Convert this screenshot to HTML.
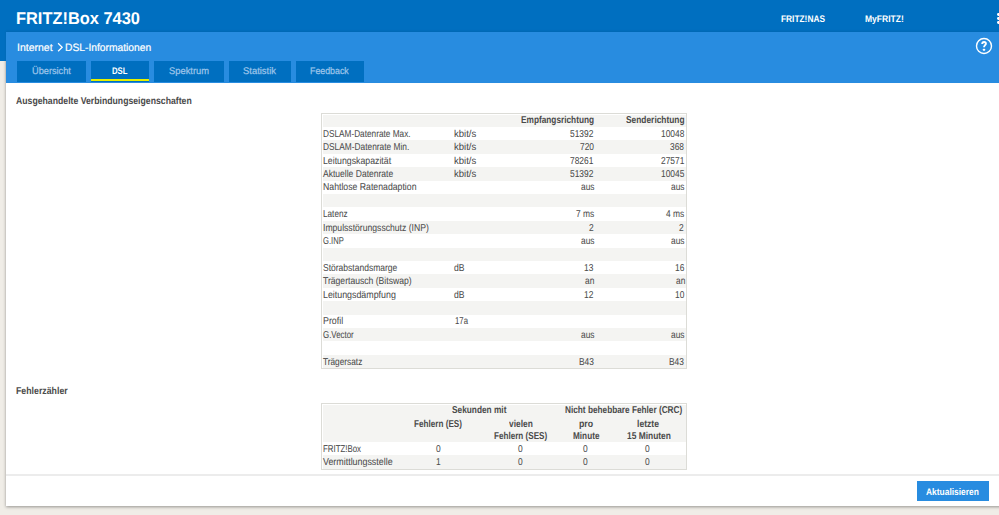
<!DOCTYPE html>
<html><head><meta charset="utf-8"><style>
html,body{margin:0;padding:0}
body{width:999px;height:515px;overflow:hidden;position:relative;background:#f0ede7;font-family:"Liberation Sans",sans-serif}
.n{font-weight:normal;-webkit-text-stroke:0.05px}
.b{font-weight:bold}
.t{position:absolute;white-space:nowrap;text-rendering:geometricPrecision;line-height:normal;transform-origin:0 0;font-family:"Liberation Sans",sans-serif}
</style></head><body>
<div style="position:absolute;left:6px;top:32px;width:1000px;height:474px;background:#fff;box-shadow:0 1px 3px rgba(0,0,0,.38)"></div>
<div style="position:absolute;left:0;top:0;width:999px;height:61px;background:#006fc0"></div>
<div style="position:absolute;left:6px;top:32px;width:993px;height:51px;background:#288ce0;box-shadow:0 -1px 2px rgba(0,0,0,.08)"></div>
<div style="position:absolute;left:6px;top:474px;width:993px;height:2px;background:#ececec"></div>
<!-- tabs -->
<div style="position:absolute;left:17px;top:61px;width:69px;height:21px;background:#006fc0"></div>
<div style="position:absolute;left:91px;top:61px;width:58px;height:21px;background:#006fc0"></div>
<div style="position:absolute;left:91px;top:79px;width:58px;height:2px;background:#e6f000"></div>
<div style="position:absolute;left:154px;top:61px;width:70px;height:21px;background:#006fc0"></div>
<div style="position:absolute;left:229px;top:61px;width:62px;height:21px;background:#006fc0"></div>
<div style="position:absolute;left:296px;top:61px;width:68px;height:21px;background:#006fc0"></div>
<!-- menu icon -->
<div style="position:absolute;left:997px;top:13px;width:8px;height:2.8px;border-radius:1.4px;background:#fff"></div>
<div style="position:absolute;left:997px;top:17.2px;width:8px;height:2.8px;border-radius:1.4px;background:#fff"></div>
<div style="position:absolute;left:997px;top:21.3px;width:8px;height:2.8px;border-radius:1.4px;background:#fff"></div>
<!-- help icon -->
<svg style="position:absolute;left:975px;top:37px" width="18" height="18" viewBox="0 0 18 18"><circle cx="9" cy="9" r="7.5" fill="none" stroke="#fff" stroke-width="1.4"/><path d="M7.2 7.1C7.2 5.8 8 5 9.1 5C10.2 5 10.9 5.7 10.9 6.7C10.9 8.1 9 8.3 9 10.3" fill="none" stroke="#fff" stroke-width="1.9"/><rect x="7.9" y="11.7" width="2.2" height="2.1" rx="0.6" fill="#fff"/></svg>
<!-- chevron -->
<svg style="position:absolute;left:56px;top:42px" width="8" height="11" viewBox="0 0 8 11"><path d="M2.1 1.2L6.2 5.2L2.1 9.2" fill="none" stroke="#fff" stroke-width="1.25"/></svg>
<!-- button -->
<div style="position:absolute;left:917px;top:481px;width:72px;height:20px;background:#288ce0"></div>
<div style="position:absolute;left:321px;top:113px;width:366px;height:256px;background:#fff;box-sizing:border-box;border:1px solid #dcdcd7"></div><div style="position:absolute;left:323px;top:115px;width:363px;height:12px;background:#f4f4f2;"></div><div style="position:absolute;left:323px;top:140.4px;width:363px;height:13.4px;background:#f4f4f2;"></div><div style="position:absolute;left:323px;top:167.2px;width:363px;height:13.4px;background:#f4f4f2;"></div><div style="position:absolute;left:323px;top:194.0px;width:363px;height:13.4px;background:#f4f4f2;"></div><div style="position:absolute;left:323px;top:220.8px;width:363px;height:13.4px;background:#f4f4f2;"></div><div style="position:absolute;left:323px;top:247.6px;width:363px;height:13.4px;background:#f4f4f2;"></div><div style="position:absolute;left:323px;top:274.4px;width:363px;height:13.4px;background:#f4f4f2;"></div><div style="position:absolute;left:323px;top:301.2px;width:363px;height:13.4px;background:#f4f4f2;"></div><div style="position:absolute;left:323px;top:328.0px;width:363px;height:13.4px;background:#f4f4f2;"></div><div style="position:absolute;left:323px;top:354.8px;width:363px;height:13.4px;background:#f4f4f2;"></div>
<div style="position:absolute;left:321px;top:403px;width:366px;height:67px;background:#fff;box-sizing:border-box;border:1px solid #dcdcd7"></div><div style="position:absolute;left:323px;top:405px;width:363px;height:37px;background:#f4f4f2;"></div><div style="position:absolute;left:323px;top:455.4px;width:363px;height:13.2px;background:#f4f4f2;"></div>
<div class="t b" style="left:16.03px;top:9.00px;font-size:17px;color:#fff;transform:scaleX(0.9652);">FRITZ!Box 7430</div>
<div class="t b" style="left:780.80px;top:14.00px;font-size:9.6px;color:#fff;transform:scaleX(0.8687);">FRITZ!NAS</div>
<div class="t b" style="left:864.60px;top:14.00px;font-size:9.6px;color:#fff;transform:scaleX(0.8896);">MyFRITZ!</div>
<div class="t n" style="left:17.20px;top:42.00px;font-size:10.6px;color:#fff;transform:scaleX(0.9894);-webkit-text-stroke:0.2px">Internet</div>
<div class="t n" style="left:65.30px;top:42.00px;font-size:10.6px;color:#fff;transform:scaleX(0.9694);-webkit-text-stroke:0.2px">DSL-Informationen</div>
<div class="t n" style="left:32.00px;top:66.00px;font-size:9.6px;color:#9cc4ea;transform:scaleX(0.9595);-webkit-text-stroke:0.25px">Übersicht</div>
<div class="t b" style="left:112.30px;top:66.00px;font-size:9.6px;color:#fff;transform:scaleX(0.8072);">DSL</div>
<div class="t n" style="left:168.80px;top:66.00px;font-size:9.6px;color:#9cc4ea;transform:scaleX(0.9741);-webkit-text-stroke:0.25px">Spektrum</div>
<div class="t n" style="left:243.00px;top:66.00px;font-size:9.6px;color:#9cc4ea;transform:scaleX(0.9825);-webkit-text-stroke:0.25px">Statistik</div>
<div class="t n" style="left:310.40px;top:66.00px;font-size:9.6px;color:#9cc4ea;transform:scaleX(0.9189);-webkit-text-stroke:0.25px">Feedback</div>
<div class="t b" style="left:16.00px;top:96.00px;font-size:10px;color:#4a4a4a;transform:scaleX(0.8687);">Ausgehandelte Verbindungseigenschaften</div>
<div class="t b" style="left:16.00px;top:386.00px;font-size:10px;color:#4a4a4a;transform:scaleX(0.8777);">Fehlerzähler</div>
<div class="t b" style="left:521.20px;top:115.00px;font-size:10px;color:#4a4a4a;transform:scaleX(0.8274);">Empfangsrichtung</div>
<div class="t b" style="left:626.00px;top:115.00px;font-size:10px;color:#4a4a4a;transform:scaleX(0.8370);">Senderichtung</div>
<div class="t n" style="left:322.90px;top:129.00px;font-size:10px;color:#4a4a4a;transform:scaleX(0.8247);">DSLAM-Datenrate Max.</div>
<div class="t n" style="left:454.10px;top:129.00px;font-size:10px;color:#4a4a4a;transform:scaleX(0.9554);">kbit/s</div>
<div class="t n" style="left:570.47px;top:129.00px;font-size:10px;color:#4a4a4a;transform:scaleX(0.8400);">51392</div>
<div class="t n" style="left:660.67px;top:129.00px;font-size:10px;color:#4a4a4a;transform:scaleX(0.8400);">10048</div>
<div class="t n" style="left:322.90px;top:142.00px;font-size:10px;color:#4a4a4a;transform:scaleX(0.8344);">DSLAM-Datenrate Min.</div>
<div class="t n" style="left:454.10px;top:142.00px;font-size:10px;color:#4a4a4a;transform:scaleX(0.9554);">kbit/s</div>
<div class="t n" style="left:579.82px;top:142.00px;font-size:10px;color:#4a4a4a;transform:scaleX(0.8400);">720</div>
<div class="t n" style="left:670.02px;top:142.00px;font-size:10px;color:#4a4a4a;transform:scaleX(0.8400);">368</div>
<div class="t n" style="left:322.90px;top:156.00px;font-size:10px;color:#4a4a4a;transform:scaleX(0.8750);">Leitungskapazität</div>
<div class="t n" style="left:454.10px;top:156.00px;font-size:10px;color:#4a4a4a;transform:scaleX(0.9554);">kbit/s</div>
<div class="t n" style="left:570.47px;top:156.00px;font-size:10px;color:#4a4a4a;transform:scaleX(0.8400);">78261</div>
<div class="t n" style="left:660.67px;top:156.00px;font-size:10px;color:#4a4a4a;transform:scaleX(0.8400);">27571</div>
<div class="t n" style="left:322.90px;top:169.00px;font-size:10px;color:#4a4a4a;transform:scaleX(0.8536);">Aktuelle Datenrate</div>
<div class="t n" style="left:454.10px;top:169.00px;font-size:10px;color:#4a4a4a;transform:scaleX(0.9554);">kbit/s</div>
<div class="t n" style="left:570.47px;top:169.00px;font-size:10px;color:#4a4a4a;transform:scaleX(0.8400);">51392</div>
<div class="t n" style="left:660.67px;top:169.00px;font-size:10px;color:#4a4a4a;transform:scaleX(0.8400);">10045</div>
<div class="t n" style="left:322.90px;top:182.00px;font-size:10px;color:#4a4a4a;transform:scaleX(0.8713);">Nahtlose Ratenadaption</div>
<div class="t n" style="left:580.66px;top:182.00px;font-size:10px;color:#4a4a4a;transform:scaleX(0.8400);">aus</div>
<div class="t n" style="left:670.86px;top:182.00px;font-size:10px;color:#4a4a4a;transform:scaleX(0.8400);">aus</div>
<div class="t n" style="left:322.90px;top:209.00px;font-size:10px;color:#4a4a4a;transform:scaleX(0.8193);">Latenz</div>
<div class="t n" style="left:576.00px;top:209.00px;font-size:10px;color:#4a4a4a;transform:scaleX(0.8400);">7 ms</div>
<div class="t n" style="left:666.20px;top:209.00px;font-size:10px;color:#4a4a4a;transform:scaleX(0.8400);">4 ms</div>
<div class="t n" style="left:322.90px;top:223.00px;font-size:10px;color:#4a4a4a;transform:scaleX(0.8613);">Impulsstörungsschutz (INP)</div>
<div class="t n" style="left:589.16px;top:223.00px;font-size:10px;color:#4a4a4a;transform:scaleX(0.8400);">2</div>
<div class="t n" style="left:679.36px;top:223.00px;font-size:10px;color:#4a4a4a;transform:scaleX(0.8400);">2</div>
<div class="t n" style="left:322.90px;top:236.00px;font-size:10px;color:#4a4a4a;transform:scaleX(0.7621);">G.INP</div>
<div class="t n" style="left:580.66px;top:236.00px;font-size:10px;color:#4a4a4a;transform:scaleX(0.8400);">aus</div>
<div class="t n" style="left:670.86px;top:236.00px;font-size:10px;color:#4a4a4a;transform:scaleX(0.8400);">aus</div>
<div class="t n" style="left:322.90px;top:263.00px;font-size:10px;color:#4a4a4a;transform:scaleX(0.8517);">Störabstandsmarge</div>
<div class="t n" style="left:454.10px;top:263.00px;font-size:10px;color:#4a4a4a;transform:scaleX(0.8600);">dB</div>
<div class="t n" style="left:584.49px;top:263.00px;font-size:10px;color:#4a4a4a;transform:scaleX(0.8400);">13</div>
<div class="t n" style="left:674.69px;top:263.00px;font-size:10px;color:#4a4a4a;transform:scaleX(0.8400);">16</div>
<div class="t n" style="left:322.90px;top:276.00px;font-size:10px;color:#4a4a4a;transform:scaleX(0.8601);">Trägertausch (Bitswap)</div>
<div class="t n" style="left:585.33px;top:276.00px;font-size:10px;color:#4a4a4a;transform:scaleX(0.8400);">an</div>
<div class="t n" style="left:675.53px;top:276.00px;font-size:10px;color:#4a4a4a;transform:scaleX(0.8400);">an</div>
<div class="t n" style="left:322.90px;top:290.00px;font-size:10px;color:#4a4a4a;transform:scaleX(0.8847);">Leitungsdämpfung</div>
<div class="t n" style="left:454.10px;top:290.00px;font-size:10px;color:#4a4a4a;transform:scaleX(0.8600);">dB</div>
<div class="t n" style="left:584.49px;top:290.00px;font-size:10px;color:#4a4a4a;transform:scaleX(0.8400);">12</div>
<div class="t n" style="left:674.69px;top:290.00px;font-size:10px;color:#4a4a4a;transform:scaleX(0.8400);">10</div>
<div class="t n" style="left:322.90px;top:316.00px;font-size:10px;color:#4a4a4a;transform:scaleX(0.8865);">Profil</div>
<div class="t n" style="left:454.50px;top:316.00px;font-size:10px;color:#4a4a4a;transform:scaleX(0.7767);">17a</div>
<div class="t n" style="left:322.90px;top:330.00px;font-size:10px;color:#4a4a4a;transform:scaleX(0.7884);">G.Vector</div>
<div class="t n" style="left:580.66px;top:330.00px;font-size:10px;color:#4a4a4a;transform:scaleX(0.8400);">aus</div>
<div class="t n" style="left:670.86px;top:330.00px;font-size:10px;color:#4a4a4a;transform:scaleX(0.8400);">aus</div>
<div class="t n" style="left:322.90px;top:357.00px;font-size:10px;color:#4a4a4a;transform:scaleX(0.8287);">Trägersatz</div>
<div class="t n" style="left:578.89px;top:357.00px;font-size:10px;color:#4a4a4a;transform:scaleX(0.8400);">B43</div>
<div class="t n" style="left:669.09px;top:357.00px;font-size:10px;color:#4a4a4a;transform:scaleX(0.8400);">B43</div>
<div class="t b" style="left:452.20px;top:405.00px;font-size:10px;color:#4a4a4a;transform:scaleX(0.8304);">Sekunden mit</div>
<div class="t b" style="left:565.10px;top:405.00px;font-size:10px;color:#4a4a4a;transform:scaleX(0.8245);">Nicht behebbare Fehler (CRC)</div>
<div class="t b" style="left:414.40px;top:419.00px;font-size:10px;color:#4a4a4a;transform:scaleX(0.8145);">Fehlern (ES)</div>
<div class="t b" style="left:508.50px;top:419.00px;font-size:10px;color:#4a4a4a;transform:scaleX(0.8392);">vielen</div>
<div class="t b" style="left:493.70px;top:431.00px;font-size:10px;color:#4a4a4a;transform:scaleX(0.8109);">Fehlern (SES)</div>
<div class="t b" style="left:578.90px;top:419.00px;font-size:10px;color:#4a4a4a;transform:scaleX(0.8750);">pro</div>
<div class="t b" style="left:572.50px;top:431.00px;font-size:10px;color:#4a4a4a;transform:scaleX(0.8207);">Minute</div>
<div class="t b" style="left:636.60px;top:419.00px;font-size:10px;color:#4a4a4a;transform:scaleX(0.8615);">letzte</div>
<div class="t b" style="left:626.50px;top:431.00px;font-size:10px;color:#4a4a4a;transform:scaleX(0.8404);">15 Minuten</div>
<div class="t n" style="left:323.00px;top:444.00px;font-size:10px;color:#4a4a4a;transform:scaleX(0.7862);">FRITZ!Box</div>
<div class="t n" style="left:435.88px;top:444.00px;font-size:10px;color:#4a4a4a;transform:scaleX(0.8400);">0</div>
<div class="t n" style="left:517.68px;top:444.00px;font-size:10px;color:#4a4a4a;transform:scaleX(0.8400);">0</div>
<div class="t n" style="left:583.28px;top:444.00px;font-size:10px;color:#4a4a4a;transform:scaleX(0.8400);">0</div>
<div class="t n" style="left:645.38px;top:444.00px;font-size:10px;color:#4a4a4a;transform:scaleX(0.8400);">0</div>
<div class="t n" style="left:323.00px;top:457.00px;font-size:10px;color:#4a4a4a;transform:scaleX(0.8882);">Vermittlungsstelle</div>
<div class="t n" style="left:435.88px;top:457.00px;font-size:10px;color:#4a4a4a;transform:scaleX(0.8400);">1</div>
<div class="t n" style="left:517.68px;top:457.00px;font-size:10px;color:#4a4a4a;transform:scaleX(0.8400);">0</div>
<div class="t n" style="left:583.28px;top:457.00px;font-size:10px;color:#4a4a4a;transform:scaleX(0.8400);">0</div>
<div class="t n" style="left:645.38px;top:457.00px;font-size:10px;color:#4a4a4a;transform:scaleX(0.8400);">0</div>
<div class="t b" style="left:926.00px;top:487.00px;font-size:9.6px;color:#fff;transform:scaleX(0.8776);">Aktualisieren</div>
</body></html>
